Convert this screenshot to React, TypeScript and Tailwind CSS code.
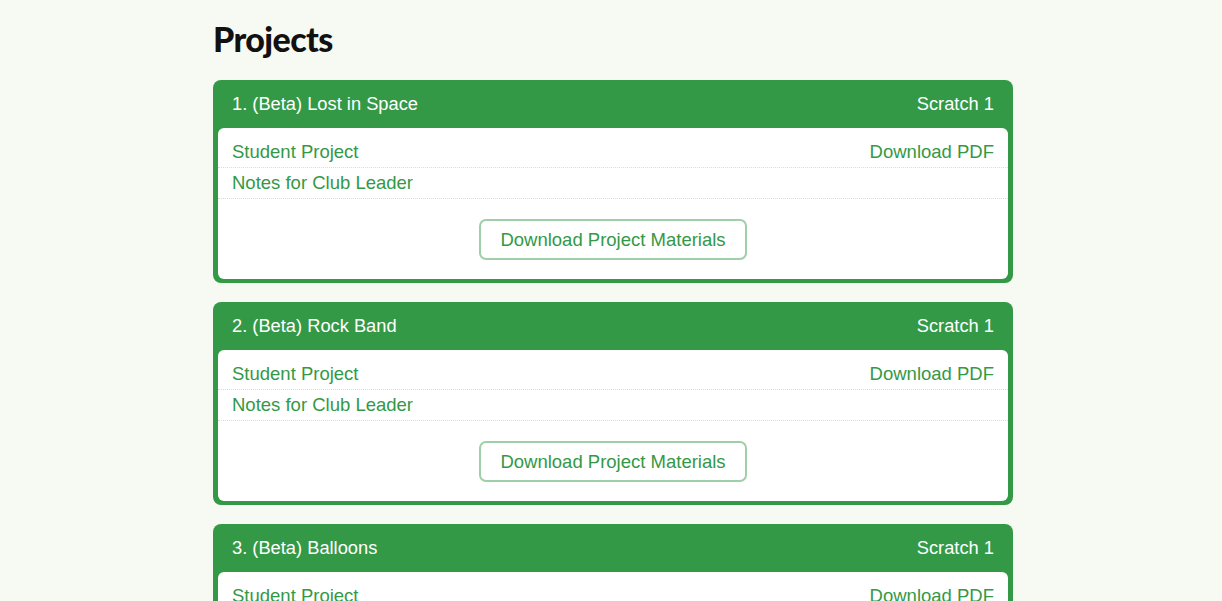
import React from "react";

const projects = [
  "1. (Beta) Lost in Space",
  "2. (Beta) Rock Band",
  "3. (Beta) Balloons",
];

function Card({ title }: { title: string }) {
  return (
    <div className="rounded-[8px] bg-[#339947] px-[5px] pb-[4px]">
      <div className="flex h-[48px] items-center justify-between px-[14px] text-[18.3px] text-white">
        <span>{title}</span>
        <span>Scratch 1</span>
      </div>
      <div className="rounded-[6px] bg-white pt-[9px] text-[18.5px] text-[#339947]">
        <div className="flex h-[31px] items-center justify-between border-b border-dotted border-[#cfe3d2] px-[14px]">
          <span>Student Project</span>
          <span>Download PDF</span>
        </div>
        <div className="flex h-[31px] items-center border-b border-dotted border-[#cfe3d2] px-[14px]">
          <span>Notes for Club Leader</span>
        </div>
        <div className="flex justify-center pt-[20px] pb-[19px]">
          <div className="flex h-[41px] items-center rounded-[7px] border-2 border-[#9fcfa8] px-[19px]">
            Download Project Materials
          </div>
        </div>
      </div>
    </div>
  );
}

export default function App() {
  return (
    <div
      className="min-h-[601px] bg-[#f7faf3] pl-[4px]"
      style={{ fontFamily: '"Liberation Sans", Arial, sans-serif' }}
    >
      <div className="mx-auto w-[800px] pt-[18px]">
        <h1
          className="mb-[20px] text-[34px] font-black leading-[42px] tracking-[-0.6px] text-[#111]"
          style={{ fontFamily: 'Lato, "Open Sans", sans-serif' }}
        >
          Projects
        </h1>
        <div className="flex flex-col gap-[19px]">
          {projects.map((p) => (
            <Card key={p} title={p} />
          ))}
        </div>
      </div>
    </div>
  );
}
